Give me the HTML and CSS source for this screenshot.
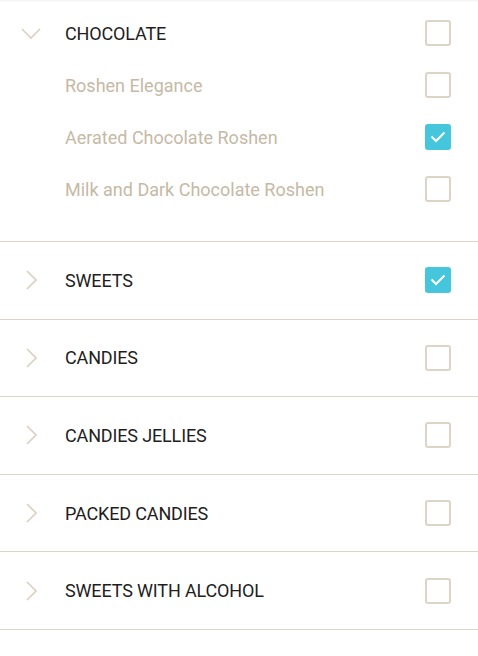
FILE: index.html
```html
<!DOCTYPE html>
<html>
<head>
<meta charset="utf-8">
<link rel="stylesheet" href="styles.css">
</head>
<body>
<div class="topbar"></div>
<ul class="tree">
  <li class="group open">
    <div class="row head">
      <span class="chev"><svg width="20" height="11" viewBox="0 0 20 11"><path d="M1 1 L10 10 L19 1" fill="none" stroke="#d9d0c3" stroke-width="1.6"/></svg></span>
      <span class="label">CHOCOLATE</span>
      <span class="box"></span>
    </div>
    <div class="row child"><span class="label">Roshen Elegance</span><span class="box"></span></div>
    <div class="row child"><span class="label">Aerated Chocolate Roshen</span><span class="box on"><svg width="16" height="12" viewBox="0 0 16 12"><path d="M1.5 5.5 L6 10 L14.5 1.5" fill="none" stroke="#fff" stroke-width="2"/></svg></span></div>
    <div class="row child"><span class="label">Milk and Dark Chocolate Roshen</span><span class="box"></span></div>
  </li>
  <li class="group">
    <div class="row head">
      <span class="chev"><svg width="11" height="20" viewBox="0 0 11 20"><path d="M1 1 L10 10 L1 19" fill="none" stroke="#d9d0c3" stroke-width="1.6"/></svg></span>
      <span class="label">SWEETS</span>
      <span class="box on"><svg width="16" height="12" viewBox="0 0 16 12"><path d="M1.5 5.5 L6 10 L14.5 1.5" fill="none" stroke="#fff" stroke-width="2"/></svg></span>
    </div>
  </li>
  <li class="group">
    <div class="row head">
      <span class="chev"><svg width="11" height="20" viewBox="0 0 11 20"><path d="M1 1 L10 10 L1 19" fill="none" stroke="#d9d0c3" stroke-width="1.6"/></svg></span>
      <span class="label">CANDIES</span>
      <span class="box"></span>
    </div>
  </li>
  <li class="group">
    <div class="row head">
      <span class="chev"><svg width="11" height="20" viewBox="0 0 11 20"><path d="M1 1 L10 10 L1 19" fill="none" stroke="#d9d0c3" stroke-width="1.6"/></svg></span>
      <span class="label">CANDIES JELLIES</span>
      <span class="box"></span>
    </div>
  </li>
  <li class="group">
    <div class="row head">
      <span class="chev"><svg width="11" height="20" viewBox="0 0 11 20"><path d="M1 1 L10 10 L1 19" fill="none" stroke="#d9d0c3" stroke-width="1.6"/></svg></span>
      <span class="label">PACKED CANDIES</span>
      <span class="box"></span>
    </div>
  </li>
  <li class="group">
    <div class="row head">
      <span class="chev"><svg width="11" height="20" viewBox="0 0 11 20"><path d="M1 1 L10 10 L1 19" fill="none" stroke="#d9d0c3" stroke-width="1.6"/></svg></span>
      <span class="label">SWEETS WITH ALCOHOL</span>
      <span class="box"></span>
    </div>
  </li>
</ul>
</body>
</html>
```

FILE: styles.css
```css
html, body {
  margin: 0;
  padding: 0;
  background: #fff;
  font-family: Roboto, "Liberation Sans", sans-serif;
  font-size: 18px;
}
.topbar {
  height: 2px;
  background: linear-gradient(#f3f3f3, #fbfbfb);
}
.tree {
  list-style: none;
  margin: 0;
  padding: 0;
}
.group {
  border-bottom: 1px solid #ddd4c8;
}
.group.open {
  padding-top: 5px;
  padding-bottom: 26px;
}
.row {
  display: flex;
  align-items: center;
  padding-left: 21px;
  padding-right: 27px;
}
.group:not(.open) .row {
  height: 76.6px;
}
.group.open .row {
  height: 52px;
}
.chev {
  width: 20px;
  display: flex;
  justify-content: center;
  align-items: center;
  margin-right: 24px;
}
.group:not(.open) .chev {
  justify-content: flex-start;
  padding-left: 5px;
  width: 15px;
}
.row.child {
  padding-left: 65px;
}
.label {
  flex: 1;
  color: #231d1c;
}
.head .label {
  letter-spacing: -0.15px;
}
.child .label {
  color: #c6b9a5;
}
.box {
  width: 22px;
  height: 22px;
  border: 2px solid #ddd4c8;
  border-radius: 3px;
  display: flex;
  align-items: center;
  justify-content: center;
}
.box.on {
  background: #45c6dc;
  border-color: #45c6dc;
}
```
